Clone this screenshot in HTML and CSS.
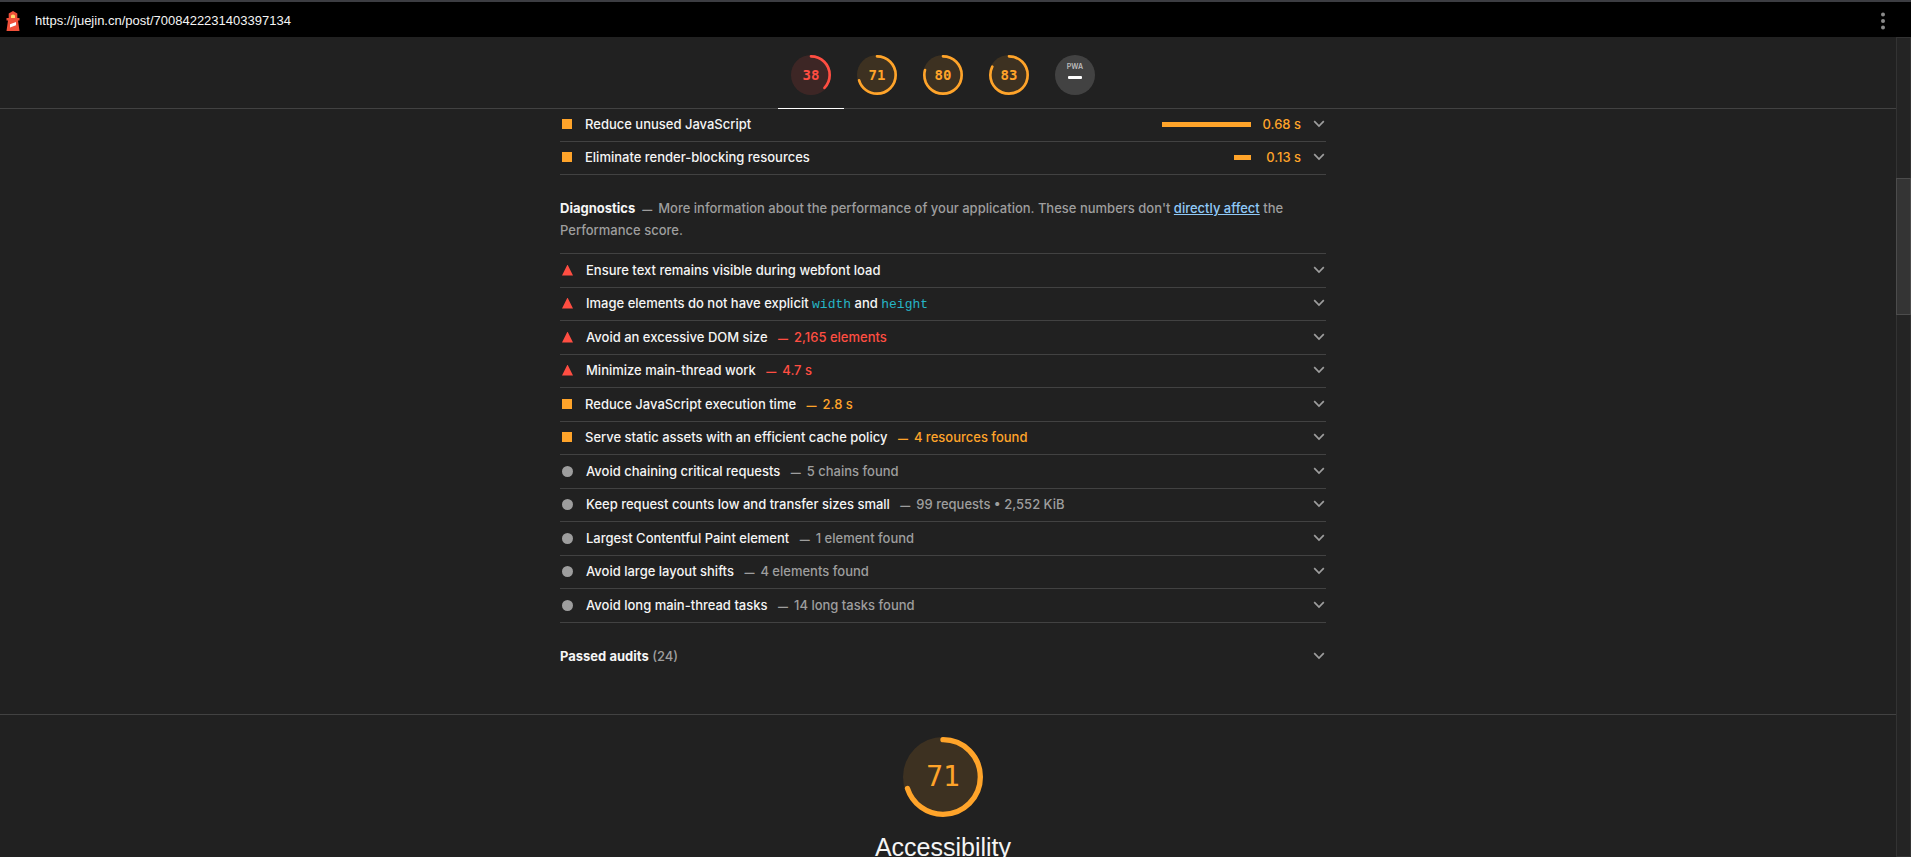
FILE: index.html
```
<!DOCTYPE html>
<html lang="en">
<head>
  <meta charset="UTF-8" />
  <meta name="viewport" content="width=device-width, initial-scale=1" />
  <title>Lighthouse Report</title>
  <link rel="stylesheet" href="styles.css">
</head>
<body>

  <!-- Shared icons -->
  <svg class="defs" aria-hidden="true">
    <symbol id="chevron" viewBox="0 0 12 8">
      <path d="M1.2 1.2 L6 6 L10.8 1.2" fill="none" stroke="currentColor" stroke-width="1.7" />
    </symbol>
  </svg>

  <!-- Topbar -->
  <header class="topbar">
    <svg class="logo" viewBox="0 0 14 20" aria-hidden="true">
      <path d="M7 0 L11.300 2.600 V7 H13.500 V9.500 H12 L13.500 20 H0.500 L2 9.500 H0.500 V7 H2.700 V2.600 Z" fill="#f0503a" />
      <path d="M5 4.600 Q7 2.400 9 4.600 V7 H5 Z" fill="#ffd76b" />
      <path d="M4 13.300 L10 11 V14.200 L4 16.600 Z" fill="#fff" />
    </svg>
    <a class="url" href="https://juejin.cn/post/7008422231403397134">https://juejin.cn/post/7008422231403397134</a>
    <button class="tools" aria-label="Tools menu">
      <svg viewBox="0 0 4 18" aria-hidden="true">
        <circle cx="2" cy="2.500" r="2" />
        <circle cx="2" cy="9" r="2" />
        <circle cx="2" cy="15.500" r="2" />
      </svg>
    </button>
  </header>

  <div class="viewport">
    <div class="report">

      <!-- Score gauges -->
      <nav class="scores">
        <a class="score fail active" href="#performance" aria-label="Performance">
          <svg class="gauge" viewBox="0 0 120 120">
            <circle class="gauge-base" cx="60" cy="60" r="60" />
            <circle class="gauge-arc" cx="60" cy="60" r="56" pathLength="100" stroke-dasharray="37 100" />
          </svg>
          <span class="score-value">38</span>
        </a>
        <a class="score average" href="#accessibility" aria-label="Accessibility">
          <svg class="gauge" viewBox="0 0 120 120">
            <circle class="gauge-base" cx="60" cy="60" r="60" />
            <circle class="gauge-arc" cx="60" cy="60" r="56" pathLength="100" stroke-dasharray="70 100" />
          </svg>
          <span class="score-value">71</span>
        </a>
        <a class="score average" href="#best-practices" aria-label="Best Practices">
          <svg class="gauge" viewBox="0 0 120 120">
            <circle class="gauge-base" cx="60" cy="60" r="60" />
            <circle class="gauge-arc" cx="60" cy="60" r="56" pathLength="100" stroke-dasharray="79 100" />
          </svg>
          <span class="score-value">80</span>
        </a>
        <a class="score average" href="#seo" aria-label="SEO">
          <svg class="gauge" viewBox="0 0 120 120">
            <circle class="gauge-base" cx="60" cy="60" r="60" />
            <circle class="gauge-arc" cx="60" cy="60" r="56" pathLength="100" stroke-dasharray="82 100" />
          </svg>
          <span class="score-value">83</span>
        </a>
        <a class="score pwa" href="#pwa">
          <span class="pwa-badge">
            <span class="pwa-name">PWA</span>
            <span class="pwa-dash"></span>
          </span>
        </a>
      </nav>

      <!-- Performance -->
      <section id="performance" class="category">
        <div class="opportunities">
          <details class="audit average">
            <summary>
              <span class="mark square"></span>
              <span class="title">Reduce unused JavaScript</span>
              <span class="spark" style="width: 89px"></span>
              <span class="saving">0.68 s</span>
              <svg class="chevron"><use href="#chevron" /></svg>
            </summary>
          </details>
          <details class="audit average">
            <summary>
              <span class="mark square"></span>
              <span class="title">Eliminate render-blocking resources</span>
              <span class="spark" style="width: 17px"></span>
              <span class="saving">0.13 s</span>
              <svg class="chevron"><use href="#chevron" /></svg>
            </summary>
          </details>
        </div>

        <p class="group-header">
          <strong>Diagnostics</strong><span class="dash">—</span>More information about the performance of your application. These numbers don't <a href="#performance">directly affect</a> the Performance score.
        </p>

        <div class="diagnostics">
          <details class="audit fail">
            <summary>
              <span class="mark triangle"></span>
              <span class="title">Ensure text remains visible during webfont load</span>
              <svg class="chevron"><use href="#chevron" /></svg>
            </summary>
          </details>
          <details class="audit fail">
            <summary>
              <span class="mark triangle"></span>
              <span class="title">Image elements do not have explicit <code>width</code> and <code>height</code></span>
              <svg class="chevron"><use href="#chevron" /></svg>
            </summary>
          </details>
          <details class="audit fail">
            <summary>
              <span class="mark triangle"></span>
              <span class="title">Avoid an excessive DOM size <span class="detail"><span class="dash">—</span>2,165 elements</span></span>
              <svg class="chevron"><use href="#chevron" /></svg>
            </summary>
          </details>
          <details class="audit fail">
            <summary>
              <span class="mark triangle"></span>
              <span class="title">Minimize main-thread work <span class="detail"><span class="dash">—</span>4.7 s</span></span>
              <svg class="chevron"><use href="#chevron" /></svg>
            </summary>
          </details>
          <details class="audit average">
            <summary>
              <span class="mark square"></span>
              <span class="title">Reduce JavaScript execution time <span class="detail"><span class="dash">—</span>2.8 s</span></span>
              <svg class="chevron"><use href="#chevron" /></svg>
            </summary>
          </details>
          <details class="audit average">
            <summary>
              <span class="mark square"></span>
              <span class="title">Serve static assets with an efficient cache policy <span class="detail"><span class="dash">—</span>4 resources found</span></span>
              <svg class="chevron"><use href="#chevron" /></svg>
            </summary>
          </details>
          <details class="audit info">
            <summary>
              <span class="mark circle"></span>
              <span class="title">Avoid chaining critical requests <span class="detail"><span class="dash">—</span>5 chains found</span></span>
              <svg class="chevron"><use href="#chevron" /></svg>
            </summary>
          </details>
          <details class="audit info">
            <summary>
              <span class="mark circle"></span>
              <span class="title">Keep request counts low and transfer sizes small <span class="detail"><span class="dash">—</span>99 requests • 2,552 KiB</span></span>
              <svg class="chevron"><use href="#chevron" /></svg>
            </summary>
          </details>
          <details class="audit info">
            <summary>
              <span class="mark circle"></span>
              <span class="title">Largest Contentful Paint element <span class="detail"><span class="dash">—</span>1 element found</span></span>
              <svg class="chevron"><use href="#chevron" /></svg>
            </summary>
          </details>
          <details class="audit info">
            <summary>
              <span class="mark circle"></span>
              <span class="title">Avoid large layout shifts <span class="detail"><span class="dash">—</span>4 elements found</span></span>
              <svg class="chevron"><use href="#chevron" /></svg>
            </summary>
          </details>
          <details class="audit info">
            <summary>
              <span class="mark circle"></span>
              <span class="title">Avoid long main-thread tasks <span class="detail"><span class="dash">—</span>14 long tasks found</span></span>
              <svg class="chevron"><use href="#chevron" /></svg>
            </summary>
          </details>
        </div>

        <details class="passed">
          <summary>
            <span class="title"><strong>Passed audits</strong> <span class="count">(24)</span></span>
            <svg class="chevron"><use href="#chevron" /></svg>
          </summary>
        </details>
      </section>

      <!-- Accessibility -->
      <section id="accessibility" class="category-header">
        <div class="score-large average">
          <svg class="gauge" viewBox="0 0 120 120" aria-hidden="true">
            <circle class="gauge-base" cx="60" cy="60" r="60" />
            <circle class="gauge-arc" cx="60" cy="60" r="56" pathLength="100" stroke-dasharray="70 100" />
          </svg>
          <span class="score-value">71</span>
        </div>
        <h2>Accessibility</h2>
      </section>
    </div>

    <div class="scrollbar"><div class="thumb"></div></div>
  </div>

</body>
</html>
```
FILE: styles.css
```
:root {
  --bg: #212121;
  --line: #424242;
  --text: #f5f5f5;
  --muted: #9e9e9e;
  --red: #ff4e42;
  --orange: #ffa42a;
  --blue: #90caf9;
  --code: #26b5c6;
}

* {
  margin: 0;
  padding: 0;
  box-sizing: border-box;
}

body {
  display: flex;
  flex-direction: column;
  height: 100vh;
  overflow: hidden;
  font-family: Inter, "Helvetica Neue", Arial, sans-serif;
  font-size: 13px;
  font-weight: 500;
  line-height: 22px;
  color: var(--text);
  background: var(--bg);
}

.defs {
  display: none;
}

/* Topbar */
.topbar {
  display: flex;
  align-items: center;
  height: 37px;
  padding: 2px 24px 0 6px;
  background: #000;
  border-top: 2px solid #3c3d42;
}

.logo {
  width: 14px;
  height: 20px;
}

.url {
  flex: 1;
  margin-left: 15px;
  font-family: "Liberation Sans", Arial, sans-serif;
  font-weight: normal;
  color: var(--text);
  text-decoration: none;
}

.tools {
  display: flex;
  padding: 0;
  border: none;
  background: none;
  cursor: pointer;
}

.tools svg {
  width: 8px;
  height: 18px;
  fill: #8a8a8a;
}

/* Report */
.viewport {
  display: flex;
  flex: 1;
  min-height: 0;
}

.report {
  flex: 1;
  overflow: hidden;
}

.scores {
  display: flex;
  justify-content: center;
  padding-right: 10px;
  background: var(--bg);
  border-bottom: 1px solid var(--line);
}

.score {
  position: relative;
  display: grid;
  place-items: center;
  width: 66px;
  padding: 18px 0 13px;
  margin-bottom: -1px;
  border-bottom: 1px solid transparent;
  text-decoration: none;
}

.score.active {
  border-bottom-color: #fff;
}

.score .gauge,
.pwa-badge {
  width: 40px;
  height: 40px;
}

.gauge,
.score-value {
  grid-area: 1 / 1;
}

.gauge {
  display: block;
  overflow: hidden;
  transform: rotate(-90deg);
}

.gauge-base {
  fill: currentColor;
  opacity: 0.13;
}

.gauge-arc {
  fill: none;
  stroke: currentColor;
  stroke-width: 8;
  stroke-linecap: round;
}

.score-value {
  font-family: "DejaVu Sans Mono", Menlo, monospace;
  font-size: 14px;
  font-weight: bold;
}

.fail {
  color: var(--red);
}

.average {
  color: var(--orange);
}

.info {
  color: var(--muted);
}

.pwa-badge {
  display: flex;
  flex-direction: column;
  align-items: center;
  gap: 6px;
  padding-top: 8px;
  border-radius: 50%;
  background: var(--line);
}

.pwa-name {
  font-size: 7px;
  line-height: 7px;
  font-weight: 600;
  color: #bdbdbd;
}

.pwa-dash {
  width: 14px;
  height: 3px;
  border-radius: 1px;
  background: #fff;
}

/* Audits */
.category {
  padding: 0 10px 47px 0;
  border-bottom: 1px solid var(--line);
}

.opportunities,
.group-header,
.diagnostics,
.passed {
  max-width: 766px;
  margin: 0 auto;
}

.diagnostics {
  border-top: 1px solid var(--line);
}

.audit {
  border-bottom: 1px solid var(--line);
}

summary {
  display: flex;
  align-items: center;
  padding-right: 1px;
  list-style: none;
  cursor: pointer;
}

.audit summary {
  padding: 4px 1px 6px 2px;
}

.diagnostics .audit:nth-child(odd) summary {
  padding-top: 5px;
}

.mark {
  width: 10px;
  height: 10px;
  margin-right: 13px;
  background: currentColor;
}

.triangle,
.circle {
  width: 11px;
  height: 11px;
}

.triangle {
  clip-path: polygon(50% 0, 100% 100%, 0 100%);
}

.circle {
  border-radius: 50%;
}

.title {
  flex: 1;
  color: var(--text);
}

.fail .detail {
  color: var(--red);
}

.average .detail {
  color: var(--orange);
}

.info .detail {
  color: var(--muted);
}

.dash {
  margin: 0 6px 0 7px;
  font-size: 10px;
  line-height: 10px;
  font-weight: 700;
}

code {
  font-family: "Liberation Mono", "Courier New", monospace;
  font-size: 13px;
  font-weight: normal;
  line-height: 13px;
  color: var(--code);
}

.spark {
  height: 5px;
  background: currentColor;
}

.saving {
  width: 50px;
  text-align: right;
}

.chevron {
  width: 12px;
  height: 8px;
  margin-left: 12px;
  color: var(--muted);
}

.group-header {
  padding: 22px 0 12px;
  color: var(--muted);
}

.group-header a {
  color: var(--blue);
}

strong {
  color: var(--text);
}

.passed {
  padding-top: 22px;
}

.count {
  color: var(--muted);
}

/* Category header */
.category-header {
  display: flex;
  flex-direction: column;
  align-items: center;
  padding: 22px 10px 0 0;
}

.score-large {
  display: grid;
  place-items: center;
}

.score-large .gauge {
  width: 80px;
  height: 80px;
}

.score-large .score-value {
  font-size: 28px;
  font-weight: normal;
}

h2 {
  margin-top: 12px;
  font-family: "Liberation Sans", Arial, sans-serif;
  font-size: 25px;
  line-height: 36px;
  font-weight: normal;
}

/* Scrollbar */
.scrollbar {
  width: 15px;
  padding-top: 140px;
  background: #242424;
  border: 1px solid #333;
}

.thumb {
  height: 137px;
  margin: 0 -1px;
  background: #343434;
  border: 1px solid #4c4c4c;
}
```
